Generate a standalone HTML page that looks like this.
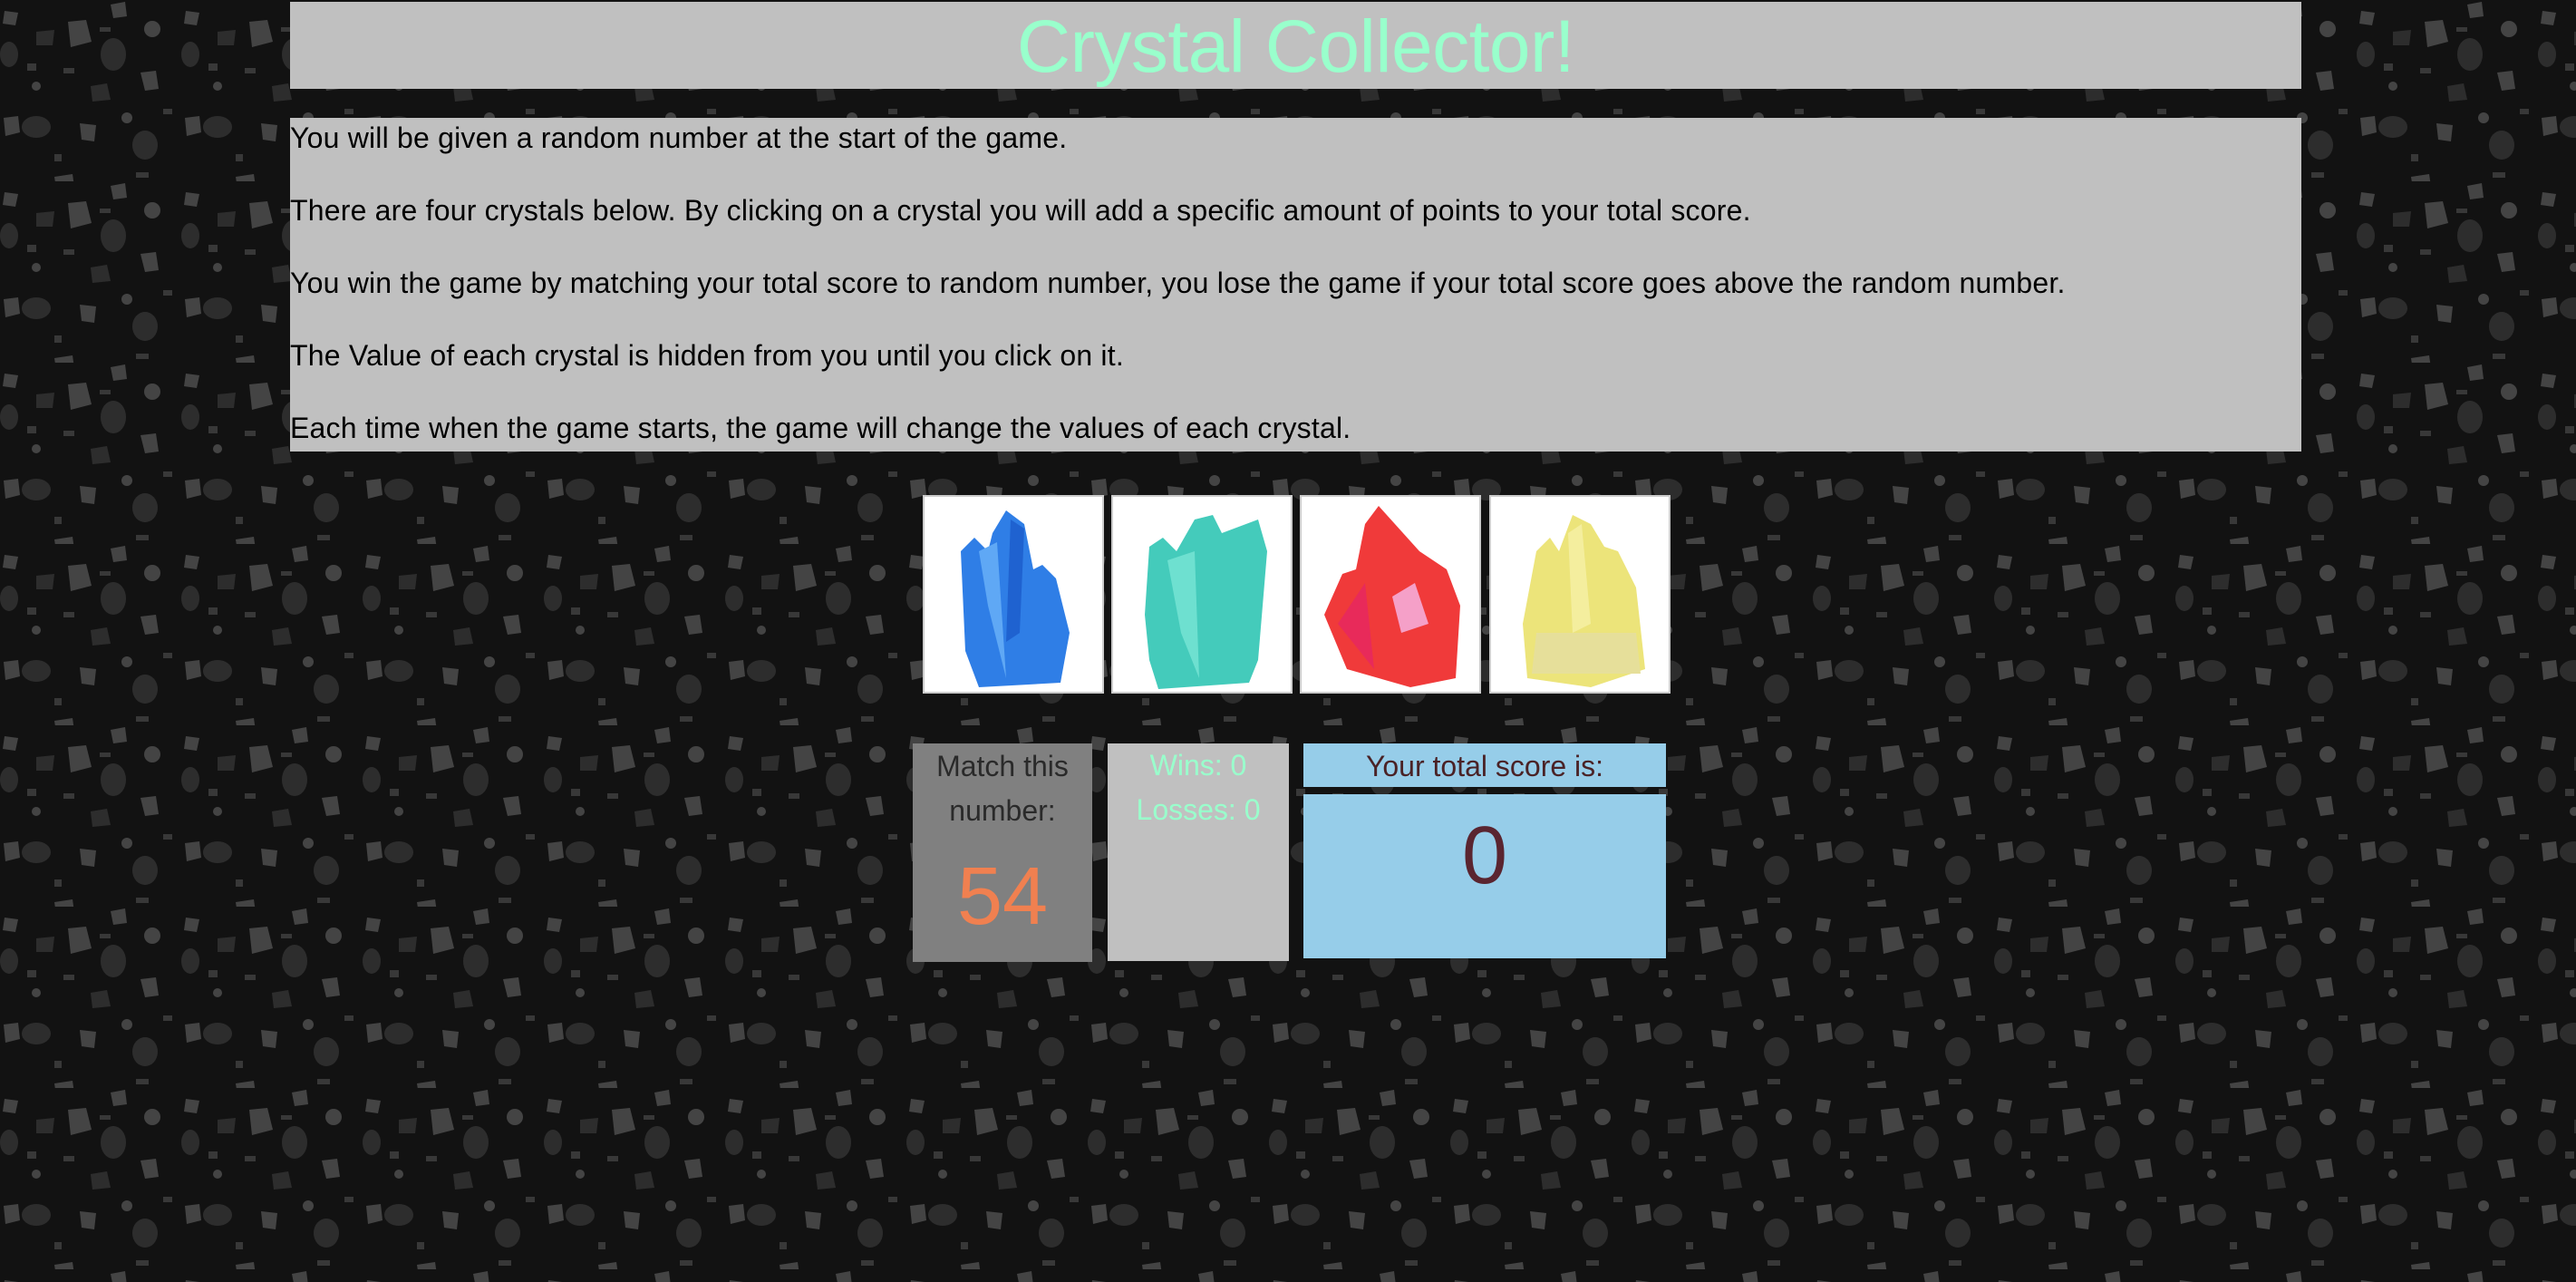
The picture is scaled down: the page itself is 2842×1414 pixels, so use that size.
<!DOCTYPE html>
<html><head><meta charset="utf-8"><style>
html,body{margin:0;padding:0;width:2842px;height:1414px;overflow:hidden;background:#121212;font-family:"Liberation Sans",sans-serif}
#bg{position:absolute;left:0;top:0}
.abs{position:absolute}
#hdr{left:320px;top:2px;width:2219px;height:96px;background:#c0c0c0;text-align:center;color:#99ffcc;font-size:82px;line-height:100px;letter-spacing:-0.5px}
#info{left:320px;top:130px;width:2219px;height:368px;background:#c0c0c0;color:#000;font-size:32px;letter-spacing:0.2px}
#info p{margin:0 0 36px 0;line-height:44px}
.cr{top:546px;width:196px;height:215px;background:#fff;border:2px solid #ccc}
.box{top:820px;height:240px;text-align:center;font-size:32px;line-height:49px}
</style></head><body>
<svg id="bg" width="2842" height="1414">
<defs><pattern id="p" width="200" height="200" patternUnits="userSpaceOnUse">
<rect width="200" height="200" fill="#121212"/>
<g fill="#444"><path d="M75 24 L95 22 L101 46 L78 52 Z"/><path d="M5 12 L20 14 L17 28 L3 26Z"/><path d="M155 80 L172 78 L175 98 L160 100Z"/><path d="M88 136 L106 138 L104 156 L90 154Z"/><path d="M4 130 L20 128 L22 146 L6 150Z"/><path d="M122 5 L138 2 L140 18 L125 20Z"/><path d="M60 195 L80 192 L82 206 L62 208Z"/><circle cx="168" cy="32" r="9"/><circle cx="140" cy="130" r="6"/><circle cx="40" cy="95" r="5"/></g>
<g fill="#2d2d2d"><ellipse cx="40" cy="140" rx="16" ry="12"/><ellipse cx="125" cy="60" rx="14" ry="18"/><path d="M40 35 L60 33 L58 50 L40 50Z"/><ellipse cx="160" cy="160" rx="14" ry="16"/><path d="M100 95 L118 92 L122 110 L102 112Z"/><ellipse cx="10" cy="60" rx="10" ry="14"/></g>
<g fill="#383838"><rect x="150" y="190" width="14" height="6"/><rect x="110" y="30" width="12" height="5"/><rect x="30" y="70" width="10" height="8"/><rect x="70" y="75" width="12" height="6"/><rect x="180" y="120" width="10" height="6"/><rect x="60" y="170" width="8" height="8"/></g>
</pattern></defs>
<rect width="2842" height="1414" fill="url(#p)"/>
</svg>
<div id="hdr" class="abs">Crystal Collector!</div>
<div id="info" class="abs">
<p>You will be given a random number at the start of the game.</p>
<p>There are four crystals below. By clicking on a crystal you will add a specific amount of points to your total score.</p>
<p>You win the game by matching your total score to random number, you lose the game if your total score goes above the random number.</p>
<p>The Value of each crystal is hidden from you until you click on it.</p>
<p>Each time when the game starts, the game will change the values of each crystal.</p>
</div>
<div class="abs cr" style="left:1018px"><svg width="196" height="215"><polygon points="45,170 40,60 55,45 70,60 75,40 90,15 110,30 120,80 130,75 145,90 160,150 150,205 60,210" fill="#2f7ee6"/><polygon points="60,60 70,120 90,200 80,50" fill="#5fa8f5"/><polygon points="95,25 110,35 105,150 90,160" fill="#1f62d0"/></svg></div>
<div class="abs cr" style="left:1226px"><svg width="196" height="215"><polygon points="35,130 40,55 55,45 70,60 90,25 110,20 120,40 160,25 170,60 160,180 150,205 50,212 40,180" fill="#44cbbb"/><polygon points="60,70 75,150 95,200 90,60" fill="#6ee0d0"/></svg></div>
<div class="abs cr" style="left:1434px"><svg width="196" height="215"><polygon points="25,130 45,85 60,80 70,30 85,10 130,60 160,80 175,120 170,200 120,210 50,190" fill="#f03a3a"/><polygon points="100,110 125,95 140,140 110,150" fill="#f5a0c8"/><polygon points="40,140 70,95 80,190" fill="#e82a5a"/></svg></div>
<div class="abs cr" style="left:1643px"><svg width="196" height="215"><polygon points="35,140 50,60 65,45 75,60 90,20 110,30 125,55 140,60 160,100 170,190 110,210 40,200" fill="#ece47a"/><polygon points="85,40 100,30 110,140 90,150" fill="#f4ee9e"/><polygon points="50,150 160,150 165,195 45,195" fill="#e6df9a"/></svg></div>
<div class="abs box" style="left:1007px;width:198px;background:#808080;color:#2a2a2a;padding-top:1px">Match this<br>number:<div style="font-size:90px;color:#f08050;line-height:100px;margin-top:20px">54</div></div>
<div class="abs box" style="left:1222px;width:200px;background:#c0c0c0;color:#99ffcc">Wins: 0<br>Losses: 0</div>
<div class="abs" style="left:1438px;top:820px;width:400px;height:48px;background:#96cde9;color:#4a2226;font-size:32px;line-height:50px;text-align:center">Your total score is:</div>
<div class="abs" style="left:1438px;top:876px;width:400px;height:181px;background:#96cde9;color:#5a2530;font-size:90px;line-height:136px;text-align:center">0</div>
</body></html>
